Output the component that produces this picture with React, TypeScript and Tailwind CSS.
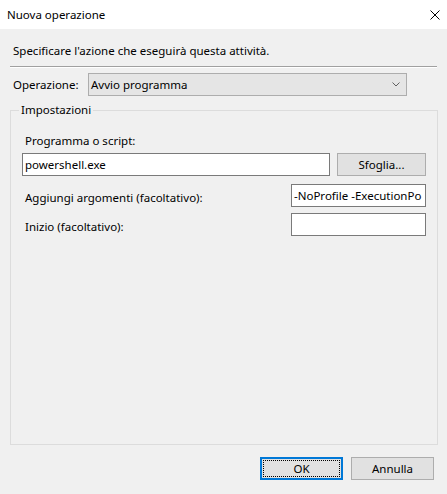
import React from 'react';

const font = { fontFamily: '"Noto Sans", "Liberation Sans", sans-serif' };

const TextBox = ({ value, className }: { value: string; className?: string }) => (
    <div className={`h-[23px] bg-white border border-[#7a7a7a] px-[2px] flex items-center overflow-hidden whitespace-nowrap text-black ${className || ''}`}>
        {value}
    </div>
);

export default function App() {
    return (
        <div className="w-[447px] h-[494px] flex flex-col bg-[#f0f0f0] text-[11.5px] leading-[16px] text-black" style={font}>
            {/* barra del titolo */}
            <div className="h-[29px] shrink-0 bg-white flex items-center justify-between pl-[7px] pr-[7px]">
                <span>Nuova operazione</span>
                <svg width="10" height="10" viewBox="0 0 10 10">
                    <path d="M0.5 0.5 L9.5 9.5 M9.5 0.5 L0.5 9.5" stroke="#000" strokeWidth="1" />
                </svg>
            </div>

            <div className="flex-1 flex flex-col px-[10px]">
                <p className="mt-[14px] pl-[3px]">Specificare l'azione che eseguirà questa attività.</p>

                {/* separatore */}
                <div className="mt-[7px] h-[1px] bg-[#a0a0a0]" />
                <div className="h-[1px] bg-white" />

                {/* Operazione */}
                <div className="mt-[5px] flex items-center h-[23px]">
                    <span className="pl-[3px] w-[78px]">Operazione:</span>
                    <div className="w-[319px] h-[23px] bg-[#e5e5e5] border border-[#adadad] flex items-center justify-between pl-[2px] pr-[6px]">
                        <span>Avvio programma</span>
                        <svg width="8" height="5" viewBox="0 0 8 5">
                            <path d="M0.5 0.5 L4 4 L7.5 0.5" fill="none" stroke="#606060" strokeWidth="1" />
                        </svg>
                    </div>
                </div>

                {/* Impostazioni */}
                <fieldset className="mt-[6px] h-[343px] border border-[#dcdcdc] px-[11px]">
                    <legend className="ml-[-3px] px-[2px] leading-[16px]">Impostazioni</legend>

                    <p className="mt-[15px] pl-[3px]">Programma o script:</p>
                    <div className="mt-[4px] flex items-center gap-[7px]">
                        <TextBox value="powershell.exe" className="w-[308px]" />
                        <button className="w-[89px] h-[23px] bg-[#e1e1e1] border border-[#adadad]">Sfoglia...</button>
                    </div>

                    <div className="mt-[8px] flex items-start justify-between">
                        <span className="pl-[3px] pt-[6px]">Aggiungi argomenti (facoltativo):</span>
                        <TextBox value="-NoProfile -ExecutionPo" className="w-[135px]" />
                    </div>

                    <div className="mt-[6px] flex items-start justify-between">
                        <span className="pl-[3px] pt-[6px]">Inizio (facoltativo):</span>
                        <TextBox value="" className="w-[135px]" />
                    </div>
                </fieldset>

                {/* pulsanti */}
                <div className="mt-[12px] flex justify-end gap-[8px] pr-[3px]">
                    <button className="w-[83px] h-[23px] bg-[#e1e1e1] border-2 border-[#0078d7] p-[1px]">
                        <div className="w-full h-full border border-dotted border-black flex items-center justify-center">OK</div>
                    </button>
                    <button className="w-[83px] h-[23px] bg-[#e1e1e1] border border-[#adadad]">Annulla</button>
                </div>
            </div>
        </div>
    );
}
